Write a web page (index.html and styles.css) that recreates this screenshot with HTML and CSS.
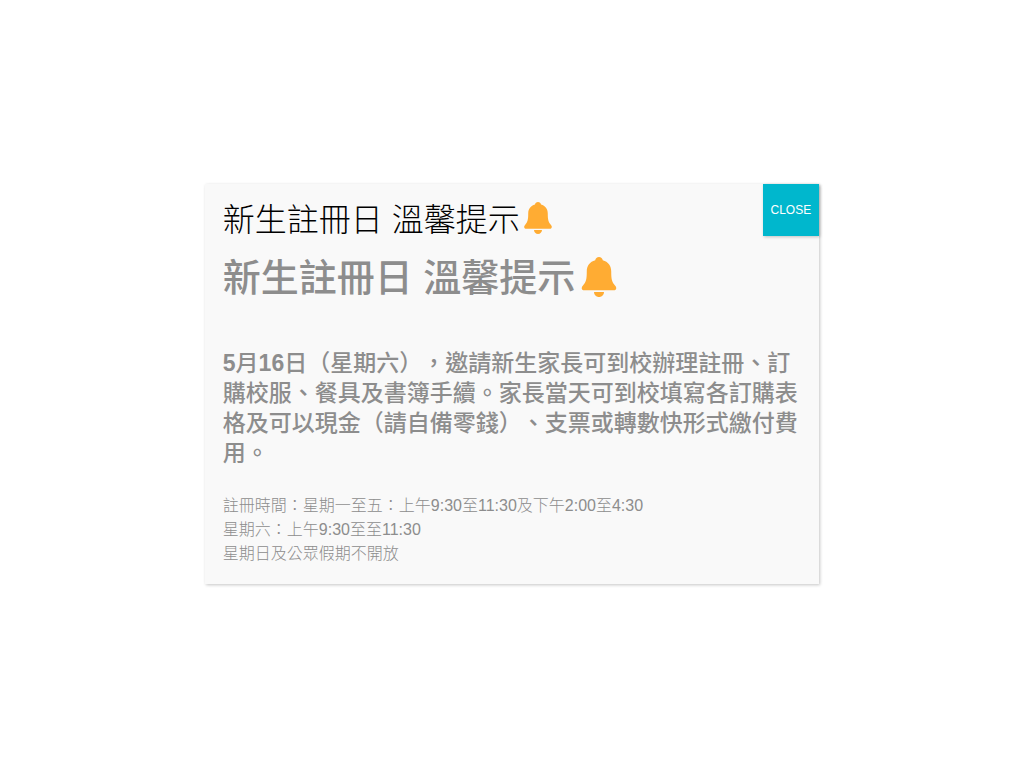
FILE: index.html
```html
<!DOCTYPE html>
<html lang="zh-Hant">
<head>
<meta charset="utf-8">
<meta name="viewport" content="width=device-width, initial-scale=1">
<title>新生註冊日 溫馨提示</title>
<link rel="stylesheet" href="styles.css">
</head>
<body>
<main class="popup" role="dialog" aria-labelledby="popup-title">
  <button class="close" type="button">CLOSE</button>
  <h1 class="popup-title" id="popup-title">新生註冊日 溫馨提示<svg class="bell" viewBox="0 0 36 36" aria-hidden="true"><path d="M18 0c-1.800 0-3.200 1.200-3.400 2.900C9.800 4.200 7 8 7 13c0 6.500-.5 9.500-3.600 12.800C1.600 27.800 2.600 30 4.600 30h26.800c2 0 3-2.200 1.200-4.200C29.500 22.500 29 19.500 29 13c0-5-2.800-8.800-7.600-10.100C21.200 1.200 19.800 0 18 0z"/><path d="M13.500 31.500h9c0 2.500-2 4.500-4.500 4.500s-4.500-2-4.500-4.500z"/></svg></h1>
  <h2 class="heading">新生註冊日 溫馨提示<svg class="bell" viewBox="0 0 36 36" aria-hidden="true"><path d="M18 0c-1.800 0-3.200 1.200-3.400 2.900C9.800 4.200 7 8 7 13c0 6.500-.5 9.500-3.600 12.800C1.600 27.800 2.600 30 4.600 30h26.800c2 0 3-2.200 1.200-4.200C29.500 22.500 29 19.500 29 13c0-5-2.800-8.800-7.600-10.100C21.200 1.200 19.800 0 18 0z"/><path d="M13.500 31.500h9c0 2.500-2 4.500-4.500 4.500s-4.500-2-4.500-4.500z"/></svg></h2>
  <h3 class="notice"><b>5</b>月<b>16</b>日（星期六），邀請新生家長可到校辦理註冊、訂購校服、餐具及書簿手續。家長當天可到校填寫各訂購表格及可以現金（請自備零錢）、支票或轉數快形式繳付費用。</h3>
  <p class="hours">註冊時間：星期一至五：上午9:30至11:30及下午2:00至4:30<br>星期六：上午9:30至至11:30<br>星期日及公眾假期不開放</p>
</main>
</body>
</html>
```
FILE: styles.css
```css
* {
  box-sizing: border-box;
}

body {
  margin: 0;
  min-height: 100vh;
  display: flex;
  align-items: center;
  justify-content: center;
  background: #fff;
  color: #8d8d8d;
  font-family: "Liberation Sans", "Noto Sans CJK TC", sans-serif;
  text-spacing-trim: space-all;
}

.popup {
  position: relative;
  width: 60%;
  padding: 18px;
  background: #f9f9f9;
  box-shadow: 1px 1px 3px rgba(2, 2, 2, 0.23);
}

.close {
  position: absolute;
  top: 0;
  right: 0;
  padding: 8px;
  border: 0;
  background: #00b7cd;
  color: #fff;
  font: 12px/36px "Liberation Sans", sans-serif;
  box-shadow: 1px 1px 3px rgba(2, 2, 2, 0.23);
  cursor: pointer;
}

.popup-title {
  margin: 0;
  color: #000;
  font-size: 32px;
  font-weight: 300;
  line-height: 36px;
}

.heading {
  margin: 16px 0 46px;
  font-size: 38px;
  font-weight: 500;
  line-height: 48px;
}

.bell {
  width: 1em;
  height: 1em;
  margin: 0 2px;
  vertical-align: -3px;
  fill: #ffac33;
}

.heading .bell {
  width: 40px;
  height: 40px;
  margin: 0 4px;
  vertical-align: -6px;
}

.notice {
  margin: 0 0 26px;
  font-size: 23px;
  font-weight: 500;
  line-height: 30px;
}

.notice b {
  font-weight: 700;
}

.hours {
  margin: 0;
  font-size: 16px;
  font-weight: 300;
  line-height: 24px;
}
```
